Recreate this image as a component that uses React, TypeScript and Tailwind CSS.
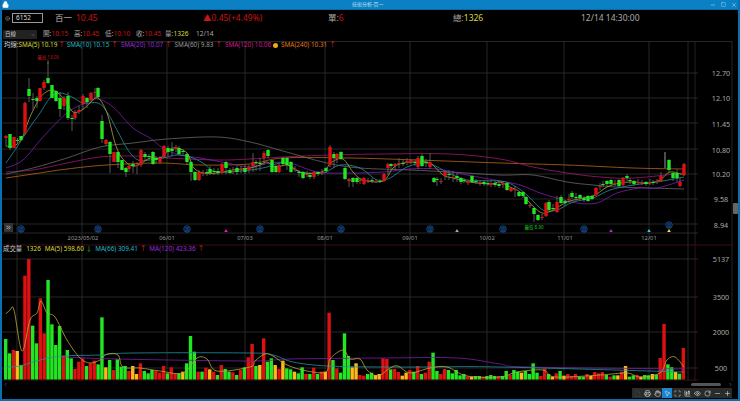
import { Lock, Minus, Square, X, File, Printer, Hand, MousePointer2, Scan, ChartCandlestick, Eye, RotateCw, Plus, ChevronLeft, ChevronRight, ChevronsRight, ChevronDown, CirclePlay } from 'lucide-react';

type Pt = [number, number];
// [x, bodyTop, bodyBottom, color, wickTop, wickBottom]
type Candle = [number, number, number, 'g' | 'r', number?, number?];

const RED = '#dd1111';
const GREEN = '#22e622';
const ORANGE = '#ffb81c';

const candles: Candle[] = [
  [6, 136, 138, 'r', 135, 146], [10, 134, 148, 'g', 134, 150], [14, 137, 148, 'r'], [17.5, 140, 141, 'g', 138, 143], [21, 136, 140, 'g'],
  [25, 103, 133, 'r', 102, 135], [29, 89, 96, 'g', 78, 102], [33, 99, 100, 'g', 93, 110], [37, 98, 101, 'g', 96, 108], [40, 88, 101, 'r'],
  [44, 82, 88, 'r', 80, 90], [48, 78, 83, 'g', 62, 84], [52, 85, 98, 'g'], [56, 91, 101, 'g', 90, 102], [60, 98, 109, 'g', 92, 117],
  [64, 98, 106, 'r', 96, 110], [68, 96, 118, 'g', 92, 120], [72, 118, 119, 'g', 115, 131], [75, 113, 118, 'r', 110, 120], [79, 110, 112, 'r', 106, 114],
  [83, 96, 104, 'r', 94, 110], [87, 98, 102, 'g', 97, 108], [91, 93, 100, 'r', 92, 102], [95, 92, 93, 'r', 88, 98], [98, 88, 97, 'g', 87, 98],
  [102, 121, 139, 'g', 115, 143], [106, 140, 144, 'r', 139, 146], [110, 142, 154, 'g', 141, 173], [114, 152, 162, 'r'], [118, 152, 162, 'g', 151, 168],
  [122, 160, 170, 'g'], [126, 168, 172, 'g', 167, 177], [129, 166, 169, 'r', 165, 172], [133, 164, 166, 'g', 161, 173], [137, 165, 166, 'r', 162, 174],
  [141, 150, 165, 'r', 149, 167], [145, 154, 157, 'g', 152, 160], [149, 156, 157, 'g', 154, 160], [153, 152, 164, 'g', 151, 165], [156, 158, 160, 'g', 156, 164],
  [160, 158, 162, 'r', 156, 164], [164, 146, 157, 'r', 145, 158], [168, 148, 152, 'g', 146, 156], [172, 149, 151, 'g', 142, 156], [176, 147, 149, 'r', 145, 152],
  [179, 148, 154, 'g', 146, 155], [183, 151, 152, 'g', 149, 155], [187, 154, 162, 'g', 153, 165], [191, 162, 172, 'g', 161, 181], [195, 172, 180, 'g', 171, 181],
  [199, 172, 180, 'r', 170, 181], [203, 173, 174, 'r', 170, 176], [207, 172, 173, 'g', 169, 176], [210, 169, 173, 'g', 166, 175], [214, 171, 172, 'g', 168, 175],
  [218, 171, 173, 'g', 168, 175], [222, 164, 173, 'r', 163, 174], [226, 162, 168, 'g', 161, 174], [230, 170, 173, 'g', 168, 174], [233, 170, 171, 'r', 167, 174],
  [237, 168, 172, 'g', 166, 175], [241, 169, 170, 'r', 166, 173], [245, 168, 172, 'g', 165, 174], [249, 167, 170, 'r', 165, 173],
  [253, 162, 166, 'r', 153, 172], [256, 162, 163, 'g', 160, 171], [260, 163, 164, 'g', 158, 171], [264, 153, 158, 'r', 151, 165], [268, 150, 156, 'g', 149, 158],
  [272, 160, 172, 'g', 159, 173], [276, 166, 172, 'g', 165, 173], [279, 165, 172, 'r', 163, 173], [283, 158, 164, 'g', 157, 166], [287, 158, 165, 'g', 157, 170],
  [291, 162, 172, 'g', 161, 173], [295, 169, 170, 'r', 166, 172], [299, 172, 173, 'g', 170, 177], [303, 172, 178, 'g', 171, 179], [307, 174, 175, 'r', 171, 177],
  [310, 175, 177, 'g', 172, 179], [314, 172, 177, 'r', 171, 179], [318, 172, 174, 'g', 171, 176], [322, 172, 173, 'r', 169, 175], [326, 168, 171, 'g', 167, 173],
  [330, 147, 165, 'r', 145, 167], [334, 154, 158, 'g', 152, 168], [337, 154, 159, 'r', 153, 163], [341, 152, 159, 'g', 151, 160], [345, 168, 179, 'g', 167, 180],
  [349, 179, 181, 'r', 178, 187], [353, 178, 182, 'g', 177, 187], [357, 178, 182, 'g', 177, 184], [360, 180, 181, 'r', 178, 184], [364, 178, 184, 'r', 177, 185],
  [368, 180, 181, 'r', 178, 183], [372, 180, 181, 'g', 178, 183], [376, 181, 182, 'r', 179, 183], [380, 181, 182, 'g', 179, 183], [384, 174, 181, 'r', 173, 182],
  [388, 164, 168, 'r', 163, 175], [391, 164, 166, 'g', 163, 170], [395, 164, 166, 'r', 163, 170], [399, 163, 164, 'r', 158, 168], [403, 163, 164, 'g', 160, 166],
  [407, 161, 163, 'r', 158, 165], [411, 160, 162, 'r', 159, 164], [415, 162, 163, 'g', 159, 166], [418, 158, 167, 'r', 156, 169], [422, 156, 166, 'g', 154, 167],
  [426, 162, 163, 'g', 159, 167], [430, 162, 167, 'r', 153, 169], [434, 178, 182, 'g', 177, 183], [437, 179, 180, 'g', 177, 186], [441, 181, 182, 'r', 178, 184],
  [445, 172, 176, 'r', 171, 180], [449, 174, 175, 'g', 170, 180], [453, 177, 178, 'r', 171, 182], [457, 176, 178, 'g', 173, 182], [461, 178, 182, 'g', 177, 184],
  [464, 180, 181, 'g', 178, 183], [468, 181, 183, 'r', 180, 185], [472, 176, 182, 'g', 175, 183], [476, 181, 182, 'g', 179, 184], [480, 182, 183, 'r', 180, 186],
  [484, 182, 184, 'g', 180, 186], [488, 183, 184, 'g', 181, 186], [491, 183, 185, 'r', 181, 187], [495, 183, 185, 'g', 181, 187], [499, 184, 186, 'g', 182, 188],
  [503, 183, 185, 'r', 181, 188], [507, 183, 190, 'g', 182, 191], [511, 188, 191, 'r', 187, 192], [515, 189, 190, 'r', 186, 197], [519, 192, 196, 'g', 191, 197],
  [523, 192, 196, 'g', 191, 198], [526, 197, 204, 'g', 196, 205], [530, 205, 206, 'r', 203, 208], [534, 208, 214, 'g', 207, 222], [538, 215, 220, 'g', 214, 221],
  [542, 217, 218, 'r', 214, 220], [546, 203, 216, 'r', 202, 217], [549, 202, 210, 'g', 200, 211], [553, 208, 209, 'g', 204, 211], [557, 202, 212, 'r', 196, 213],
  [561, 197, 203, 'g', 195, 204], [565, 201, 203, 'g', 200, 206], [569, 199, 200, 'r', 194, 203], [572, 193, 197, 'g', 191, 199], [576, 197, 198, 'g', 193, 201],
  [580, 195, 198, 'g', 194, 200], [584, 198, 200, 'g', 196, 202], [588, 196, 201, 'g', 195, 202], [592, 196, 199, 'g', 195, 200], [596, 188, 195, 'r', 187, 196],
  [600, 186, 187, 'r', 183, 190], [603, 184, 185, 'g', 181, 187], [607, 181, 184, 'g', 180, 186], [611, 180, 184, 'g', 179, 186], [615, 183, 184, 'r', 180, 186],
  [619, 180, 186, 'g', 179, 187], [623, 178, 185, 'r', 177, 186], [627, 176, 178, 'g', 174, 181], [630, 180, 181, 'g', 178, 184], [634, 181, 184, 'g', 180, 186],
  [638, 182, 183, 'r', 179, 185], [642, 182, 183, 'r', 180, 185], [646, 182, 184, 'g', 181, 186], [650, 182, 183, 'r', 179, 185], [653, 182, 183, 'g', 180, 185],
  [657, 181, 182, 'r', 179, 184], [661, 176, 181, 'r', 172, 182], [669, 160, 170, 'g', 159, 172], [673, 173, 178, 'g', 172, 181], [677, 173, 178, 'g', 169, 182],
  [680, 182, 186, 'r', 178, 187], [684, 164, 175, 'r', 163, 176],
];

// [color, top] for each session, left to right
const volumeBars: ['g' | 'r' | 'o', number][] = (
  'g207 g250 r240 o243 g285 r17 r-33 g167 g220 r85 r190 g30 g163 g225 g168 r258 g240 g265 r297 r275 r265 g288 r280 r272 g283 g142 o292 g270 r300 g268 g290 g288 r303 o288 o312 r280 g303 g310 g300 r303 r308 r288 g310 r292 r310 g310 o305 g280 g198 g245 r305 g305 r293 o298 r305 g315 r285 g297 g305 r307 g315 r300 g292 r262 ' +
  'r222 g288 o285 r205 g275 g265 o285 r297 o272 g295 g298 o305 g310 g292 r312 g312 r293 g312 r305 o305 r128 g270 r295 g308 g190 g258 o292 o280 r315 r317 g312 g308 o315 o312 r265 r267 g298 r297 r306 o317 o308 r300 g305 r288 g312 r308 r275 g248 g303 r312 r297 g300 g310 g300 g316 g312 r320 o320 g318 g318 r320 g318 g315 g318 r318 ' +
  'g318 g303 r315 g300 g305 o308 g303 g312 g280 g308 r318 r296 g312 o320 r310 g303 o317 r312 r318 r312 g320 g320 r312 o318 r306 r310 r306 g315 r320 g316 o316 r305 o288 g320 g316 r315 o320 g315 g316 o312 g314 r264 r162 g283 g292 o306 g311 r234'
)
  .split(' ')
  .map((s) => [s[0] as 'g' | 'r' | 'o', Number(s.slice(1))]);

const sma5: Pt[] = [[6, 146], [14, 146], [22, 138], [30, 117], [40, 98], [48, 91], [55, 91], [65, 100], [73, 112], [82, 110], [90, 103], [98, 98], [107, 113], [115, 143], [122, 158], [132, 166], [140, 164], [150, 158], [160, 158], [173, 148], [187, 153], [193, 167], [203, 173], [217, 173], [233, 170], [250, 168], [260, 165], [267, 162], [275, 167], [287, 165], [295, 169], [303, 173], [317, 173], [325, 170], [332, 162], [343, 159], [353, 172], [363, 180], [383, 181], [393, 168], [403, 163], [417, 162], [430, 163], [443, 175], [453, 178], [470, 182], [490, 184], [500, 182], [510, 187], [520, 192], [530, 203], [542, 213], [553, 210], [567, 202], [583, 198], [595, 195], [607, 187], [620, 183], [633, 182], [647, 183], [660, 180], [670, 172], [684, 175]];
const sma10: Pt[] = [[6, 163], [17, 147], [30, 127], [40, 113], [50, 98], [60, 93], [72, 97], [83, 103], [98, 103], [107, 112], [117, 130], [128, 150], [138, 160], [150, 160], [163, 158], [177, 155], [190, 157], [203, 163], [217, 172], [250, 170], [267, 167], [283, 163], [300, 172], [323, 173], [340, 165], [360, 168], [377, 180], [390, 178], [407, 167], [427, 163], [447, 172], [467, 180], [500, 181], [513, 185], [527, 195], [543, 210], [557, 210], [573, 202], [593, 198], [610, 190], [633, 185], [657, 182], [684, 177]];
const sma20: Pt[] = [[6, 168], [23, 160], [43, 137], [67, 113], [87, 102], [98, 99], [113, 107], [133, 128], [150, 138], [163, 148], [180, 155], [200, 158], [227, 163], [250, 167], [270, 163], [290, 163], [317, 172], [350, 173], [383, 172], [410, 169], [437, 169], [467, 175], [500, 181], [520, 185], [540, 193], [557, 198], [577, 203], [597, 203], [617, 193], [640, 188], [657, 188], [684, 180]];
const sma60: Pt[] = [[6, 174], [33, 168], [67, 158], [100, 147], [133, 143], [167, 139], [217, 137], [250, 142], [283, 151], [327, 163], [360, 168], [410, 170], [450, 172], [500, 175], [533, 175], [567, 182], [593, 185], [617, 187], [650, 188], [684, 189]];
const sma120: Pt[] = [[6, 172], [33, 170], [67, 163], [100, 157], [133, 156], [167, 158], [217, 160], [250, 159], [283, 157], [330, 155], [383, 154], [450, 154], [500, 159], [533, 167], [567, 173], [600, 177], [633, 178], [684, 173]];
const sma240: Pt[] = [[6, 178], [33, 174], [67, 169], [107, 165], [160, 163], [200, 165], [250, 164], [283, 158], [350, 158], [417, 160], [500, 163], [567, 165], [633, 168], [684, 169]];

const volMa5: Pt[] = [[6, 314], [10, 310], [14, 310], [22, 351], [30, 320], [37, 313], [41, 301], [47, 313], [55, 317], [67, 340], [80, 358], [90, 363], [100, 360], [107, 354], [118, 355], [123, 367], [140, 368], [160, 371], [183, 373], [197, 358], [207, 359], [217, 371], [250, 367], [255, 361], [265, 354], [273, 356], [287, 365], [307, 371], [326, 372], [330, 359], [343, 350], [350, 359], [360, 359], [367, 370], [378, 376], [390, 368], [398, 366], [410, 373], [430, 368], [447, 367], [467, 376], [500, 377], [517, 372], [543, 370], [555, 377], [600, 375], [627, 373], [640, 377], [660, 373], [667, 360], [675, 357], [684, 367]];
const volMa66: Pt[] = [[6, 367], [20, 366], [40, 360], [63, 356], [100, 355], [133, 353], [250, 353], [273, 355], [293, 362], [327, 366], [383, 367], [430, 367], [500, 367], [684, 372]];
const volMa120: Pt[] = [[67, 357], [117, 359], [250, 361], [290, 359], [383, 358], [457, 358], [500, 364], [527, 367], [684, 369]];

// rounded line through the points
function smooth(pts: Pt[]) {
  let d = `M${pts[0][0]} ${pts[0][1]}`;
  for (let i = 0; i < pts.length - 1; i++) {
    const p0 = pts[Math.max(i - 1, 0)];
    const p1 = pts[i];
    const p2 = pts[i + 1];
    const p3 = pts[Math.min(i + 2, pts.length - 1)];
    d += ` C${p1[0] + (p2[0] - p0[0]) / 6} ${p1[1] + (p2[1] - p0[1]) / 6} ${p2[0] - (p3[0] - p1[0]) / 6} ${p2[1] - (p3[1] - p1[1]) / 6} ${p2[0]} ${p2[1]}`;
  }
  return d;
}

const gridX = [17, 82, 167, 245, 325, 410, 487, 564, 649, 688];
const mainGridY = [73, 98, 123, 149, 174, 199, 224];
const volGridY = [259, 297, 332, 368];

const priceLabels: [string, number][] = [['12.70', 73], ['12.10', 98], ['11.45', 124], ['10.80', 150], ['10.20', 174], ['9.58', 199], ['8.94', 225]];
const volLabels: [string, number][] = [['5137', 259], ['3500', 297], ['2000', 332], ['500', 368]];
const dateLabels: [string, number][] = [['2023/05/02', 83], ['06/01', 167], ['07/03', 245], ['08/01', 325], ['09/01', 410], ['10/02', 487], ['11/01', 565], ['12/01', 649]];

const weekMarks: Pt[] = [[21, 229], [98, 229], [187, 229], [260, 229], [341, 229], [430, 229], [503, 229], [584, 229], [669, 225]];
const triMarks: [number, string][] = [[226, '#e020b0'], [457, '#aaaaaa'], [611, '#c020e0'], [649, '#30d0e0'], [669, '#f0e040']];

function Chart() {
  return (
    <svg viewBox="2 41 736 340" className="block w-[736px] h-[340px]" style={{ fontFamily: '"Noto Sans", "Noto Sans CJK TC", sans-serif' }}>
      {/* grid */}
      <line x1="2" x2="732" y1="41.5" y2="41.5" stroke="#2e2e2e" strokeWidth="0.8" />
      <line x1="732" x2="732" y1="41" y2="381" stroke="#2e2e2e" strokeWidth="0.8" />
      {gridX.map((x) => (
        <line key={x} x1={x} x2={x} y1="41" y2="381" stroke="#303030" strokeWidth="0.8" />
      ))}
      <line x1="695" x2="695" y1="41" y2="245" stroke="#2a2a2a" strokeWidth="0.8" />
      <line x1="695" x2="695" y1="245" y2="381" stroke="#4a1020" strokeWidth="0.8" />
      {[...mainGridY, 233, ...volGridY].map((y) => (
        <line key={y} x1="2" x2="698" y1={y} y2={y} stroke="#303030" strokeWidth="0.8" />
      ))}
      <line x1="2" x2="732" y1="245" y2="245" stroke="#4a1020" strokeWidth="0.8" />
      <line x1="2" x2="698" y1="380" y2="380" stroke="#4a1020" strokeWidth="0.8" />

      {/* price moving averages */}
      <path d={smooth(sma240)} fill="none" stroke="#b8661a" strokeWidth="0.8" />
      <path d={smooth(sma120)} fill="none" stroke="#a01870" strokeWidth="0.8" />
      <path d={smooth(sma60)} fill="none" stroke="#686868" strokeWidth="0.8" />
      <path d={smooth(sma20)} fill="none" stroke="#7a20b0" strokeWidth="0.8" />
      <path d={smooth(sma10)} fill="none" stroke="#2590a0" strokeWidth="0.8" />
      <path d={smooth(sma5)} fill="none" stroke="#b0a840" strokeWidth="0.8" />

      {/* candles */}
      {candles.map(([x, top, bottom, c, wt, wb]) => (
        <g key={x}>
          <line x1={x} x2={x} y1={wt ?? top} y2={wb ?? bottom} stroke="#707070" strokeWidth="0.8" />
          <rect x={x - 1.7} y={top} width="3.4" height={bottom - top} fill={c === 'g' ? GREEN : RED} />
        </g>
      ))}
      <line x1="665" x2="665" y1="152" y2="168" stroke="#808080" strokeWidth="1.2" />
      <line x1="48" x2="48" y1="60" y2="64" stroke="#707070" strokeWidth="0.8" />

      <text x="48" y="59" textAnchor="middle" fontSize="4.5" fill="#c01818">最高 13.00</text>
      <text x="534" y="229" textAnchor="middle" fontSize="4.5" fill="#1fc01f">最低 8.90</text>

      {/* week marks */}
      {weekMarks.map(([x, y]) => (
        <g key={x}>
          <circle cx={x} cy={y} r="3.3" fill="#04102a" stroke="#17508f" strokeWidth="0.8" />
          <text x={x} y={y + 1.5} textAnchor="middle" fontSize="4.2" fill="#2a68b0">周</text>
        </g>
      ))}
      {triMarks.map(([x, c]) => (
        <polygon key={x} points={`${x - 1.8},232 ${x + 1.8},232 ${x},229`} fill={c} />
      ))}

      {/* volume */}
      {volumeBars.map(([c, top], i) => {
        const y = 270 + top / 3;
        return (
          <rect key={i} x={5.7 + 3.85 * i - 1.7} y={y} width="3.4" height={379.5 - y} fill={c === 'g' ? GREEN : c === 'r' ? RED : ORANGE} />
        );
      })}
      <path d={smooth(volMa120)} fill="none" stroke="#7a1fa8" strokeWidth="0.8" />
      <path d={smooth(volMa66)} fill="none" stroke="#25909f" strokeWidth="0.8" />
      <path d={smooth(volMa5)} fill="none" stroke="#b8aa3a" strokeWidth="0.8" />

      {/* axes */}
      {dateLabels.map(([t, x]) => (
        <text key={t} x={x} y="240.4" textAnchor="middle" fontSize="5.8" fill="#999">{t}</text>
      ))}
      {[...priceLabels, ...volLabels].map(([t, y]) => (
        <text key={t} x="721" y={y + 2.6} textAnchor="middle" fontSize="7.2" fill="#a8a8a8">{t}</text>
      ))}
    </svg>
  );
}

const toolIcons = [File, Printer, Hand, MousePointer2, Scan, ChartCandlestick, Eye, RotateCw, Minus, Plus];

export default function App() {
  return (
    <div
      className="relative w-[740px] h-[401px] overflow-hidden bg-black flex flex-col border-l-2 border-r-2 border-b-2 border-[#0a6fae]"
      style={{ fontFamily: '"Noto Sans", "Noto Sans CJK TC", sans-serif' }}
    >
      {/* Title bar */}
      <div className="-ml-[2px] w-[740px] h-[10px] shrink-0 flex items-center bg-[#0c80c4] border-b border-[#0a6aa5] relative">
        <Lock className="ml-[2px] w-[7px] h-[7px] text-white fill-white" />
        <span className="absolute left-[352px] text-[5px] leading-none text-[#bfe0f5]">技術分析-百一</span>
        <div className="ml-auto mr-[3px] flex items-center gap-[5px] text-[#bfe0f5]">
          <Minus className="w-[6px] h-[6px]" />
          <Square className="w-[5px] h-[5px]" />
          <X className="w-[6px] h-[6px]" />
        </div>
      </div>

      {/* Quote row */}
      <div className="h-[18px] pb-[2px] shrink-0 flex items-center text-[8.5px] leading-none">
        <CirclePlay className="ml-[3px] w-[5px] h-[5px] text-[#aaa]" />
        <div className="ml-[2px] w-[31px] h-[10px] border border-[#999] flex items-center pl-[3px] text-[6.5px] text-[#ddd]">6152</div>
        <span className="ml-[12px] w-[21px] text-[#b8b8b8]">百一</span>
        <span className="w-[127px] text-[#c81414]">10.45</span>
        <span className="w-[125px] text-[#c81414]">▲0.45(+4.49%)</span>
        <span className="w-[125px] text-[#aaa]">單:<span className="text-[#c81414]">6</span></span>
        <span className="w-[128px] text-[#aaa]">總:<span className="text-[#d8d838]">1326</span></span>
        <span className="text-[#aaa]">12/14 14:30:00</span>
      </div>

      {/* OHLC row */}
      <div className="h-[13px] shrink-0 flex items-center text-[6.6px] leading-none text-[#aaa]">
        <div className="ml-[1px] w-[34px] h-[9px] bg-[#222] flex items-center justify-between px-[2px] text-[#ccc]">
          <span className="text-[5.5px]">日線</span>
          <ChevronDown className="w-[4px] h-[4px]" />
        </div>
        <div className="ml-[6px] flex">
          <span className="w-[31px]">開:<span className="text-[#c81414]">10.15</span></span>
          <span className="w-[31px]">高:<span className="text-[#c81414]">10.45</span></span>
          <span className="w-[31px]">低:<span className="text-[#c81414]">10.10</span></span>
          <span className="w-[29px]">收:<span className="text-[#c81414]">10.45</span></span>
          <span className="w-[31px]">量:<span className="text-[#d8d838]">1326</span></span>
          <span>12/14</span>
        </div>
      </div>

      {/* Chart */}
      <div className="relative h-[340px] shrink-0">
        <Chart />
        <div className="absolute left-[2px] -top-[1px] h-[10px] flex items-center whitespace-nowrap text-[6.4px] leading-none">
          <span className="text-[#ccc]">均線:</span>
          <span className="text-[#d8d838]">SMA(5) 10.19</span>
          <span className="ml-[1px] text-[#e02020]">↑</span>
          <span className="ml-[2px] text-[#22b8c8]">SMA(10) 10.15</span>
          <span className="ml-[2px] text-[#e02020]">↑</span>
          <span className="ml-[3px] text-[#9a2bd8]">SMA(20) 10.07</span>
          <span className="ml-[2px] text-[#e02020]">↑</span>
          <span className="ml-[3px] text-[#9a9a9a]">SMA(60) 9.83</span>
          <span className="ml-[2px] text-[#e02020]">↑</span>
          <span className="ml-[3px] text-[#d01a90]">SMA(120) 10.06</span>
          <span className="ml-[2px] w-[5px] h-[5px] rounded-full bg-[#f0a818]" />
          <span className="ml-[3px] text-[#e07818]">SMA(240) 10.31</span>
          <span className="ml-[2px] text-[#e02020]">↑</span>
        </div>
        <div className="absolute left-[1px] top-[203px] h-[10px] flex items-center whitespace-nowrap text-[6.4px] leading-none">
          <span className="text-[#ccc]">成交量</span>
          <span className="ml-[4px] text-[#d8d838]">1326</span>
          <span className="ml-[4px] text-[#d8d838]">MA(5) 598.60</span>
          <span className="ml-[2px] text-[#22d022]">↓</span>
          <span className="ml-[3px] text-[#22b8c8]">MA(66) 309.41</span>
          <span className="ml-[2px] text-[#e02020]">↑</span>
          <span className="ml-[3px] text-[#9a2bd8]">MA(120) 423.36</span>
          <span className="ml-[2px] text-[#e02020]">↑</span>
        </div>
        <div className="absolute left-[2px] top-[182px] w-[9px] h-[9px] bg-[#333] flex items-center justify-center">
          <ChevronsRight className="w-[7px] h-[7px] text-white" />
        </div>
        <div className="absolute left-[731px] top-[162px] w-[5px] h-[11px] bg-[#666] rounded-[1px]" />
      </div>

      {/* Scroll row */}
      <div className="h-[7px] shrink-0 flex items-center text-[#888]">
        <ChevronLeft className="ml-[1px] w-[5px] h-[5px]" />
        <div className="ml-auto w-[30px] h-[3px] bg-[#555] rounded-full" />
        <ChevronRight className="ml-[7px] mr-[5px] w-[5px] h-[5px] text-[#aaa]" />
      </div>

      {/* Toolbar */}
      <div className="h-[11px] shrink-0 flex justify-end items-start pr-[6px]">
        {toolIcons.map((Icon, i) => (
          <div key={i} className={`w-[10px] h-[10px] flex items-center justify-center ${i === 3 ? 'bg-[#1a86d0]' : 'bg-[#2b2b2b]'}`}>
            <Icon className={`w-[7px] h-[7px] ${i === 0 ? 'text-[#444]' : 'text-[#ddd]'}`} />
          </div>
        ))}
      </div>
    </div>
  );
}
